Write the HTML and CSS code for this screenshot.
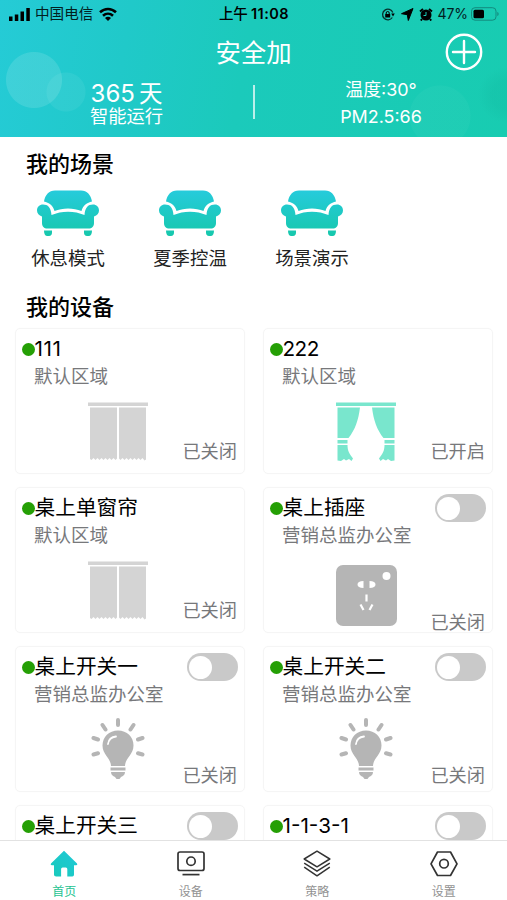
FILE: index.html
```html
<!DOCTYPE html>
<html lang="zh-CN">
<head>
<meta charset="utf-8">
<meta name="viewport" content="width=device-width, initial-scale=1">
<title>安全加</title>
<link rel="stylesheet" href="styles.css">
</head>
<body>
<svg class="defs" aria-hidden="true">
  <defs>
    <linearGradient id="teal" x1="0" y1="0" x2="0" y2="46" gradientUnits="userSpaceOnUse">
      <stop offset="0" stop-color="#26cbdc"/><stop offset="1" stop-color="#16c8ac"/>
    </linearGradient>
    <linearGradient id="home" x1="1" y1="0" x2="0" y2="1">
      <stop offset="0" stop-color="#1fc8d8"/><stop offset="1" stop-color="#18caba"/>
    </linearGradient>
    <symbol id="sofa" viewBox="0 0 62 46">
      <g fill="url(#teal)">
        <path d="M7 11.500C8 5 12 .5 18 .5h26C50 .5 54 5 55 11.500c-5 1-9 4-10.500 9.500-8-3.500-19-3.500-27 0-1.500-5.500-5.500-8.500-10.500-9.500z"/>
        <path d="M6 14.500c5 0 8 3 8.500 10.500 10-4.500 23-4.500 33 0 .5-7.500 3.500-10.500 8.500-10.500 3.500 0 6 2.500 6 6 0 3-2 5-5 6v6.500c0 3.500-2 5.500-5.500 5.500h-41C7 38.500 5 36.500 5 33v-6.500c-3-1-5-3-5-6 0-3.500 2.500-6 6-6z"/>
        <path d="M7 40.500h8v2c0 2-1 3.500-3 3.500h-1.500C8 46 7 44 7 40.500zM47 40.500h8C55 44 54 46 51.500 46H50c-2 0-3-1.500-3-3.500z"/>
      </g>
    </symbol>
    <symbol id="curtain-closed" viewBox="0 0 60 60">
      <g fill="#d4d4d4">
        <path d="M0 .5h60v3.500H0z"/>
        <path d="M2 5.500h27v51l-1.500 1.500-2-2-2 2-2-2-2 2-2-2-2 2-2-2-2 2-2-2-2 2-2-2-2 2-1.500-1zM31 5.500h27v52l-1.500 1-2-2.500-2 2-2-2-2 2-2-2-2 2-2-2-2 2-2-2-2 2-2-2-2 2-1.500-1.500z"/>
      </g>
    </symbol>
    <symbol id="curtain-open" viewBox="0 0 60 60">
      <g fill="#79e6cd">
        <path d="M0 .5h60v3.500H0z"/>
        <path d="M1.500 5.500H24C22.500 18 19 28 12.500 36H1.500zM58.500 5.500H36C37.500 18 41 28 47.500 36h11zM1.500 38h10v3.500h-10zM58.500 38h-10v3.500h10z"/>
        <path d="M1.500 43h10c0 6 2 9 5.500 13.500l-1.500 2.500-2.500-2-3 1.500-2-1.500-3 2-3.500-.5zM58.500 43h-10c0 6-2 9-5.500 13.500l1.500 2.500 2.500-2 3 1.500 2-1.500 3 2 3.500-.5z"/>
      </g>
    </symbol>
    <symbol id="socket" viewBox="0 0 61 61">
      <rect width="61" height="61" rx="7" fill="#b5b5b5"/>
      <g fill="#fff">
        <circle cx="50.500" cy="11" r="4"/>
        <path d="M27.500 16v7c-4 0-6-1.500-6-3.500s2-3.500 6-3.500zM33.500 16v7c4 0 6-1.500 6-3.500s-2-3.500-6-3.500z"/>
      </g>
      <path d="M30.500 29.500v7M24.500 39.500l3 5.500M36.500 39.500l-3 5.500" fill="none" stroke="#fff" stroke-width="2.200"/>
    </symbol>
    <symbol id="bulb" viewBox="0 0 54 62">
      <g fill="#b5b5b5">
        <path d="M27 12.500c9 0 15.500 6.500 15.500 15 0 9-8.500 13-8.500 20.500H20c0-7.500-8.500-11.500-8.500-20.500 0-8.500 6.500-15 15.500-15zM19.500 49.500h15v3h-15zM20 54h14c0 3-2 4-4 5l-1.500 2h-3L24 59c-2-1-4-2-4-5z"/>
      </g>
      <g stroke="#b5b5b5" stroke-width="4" stroke-linecap="round" fill="none">
        <path d="M27 2v5M11.500 7l3 4.500M42.500 7l-3 4.500M2.500 20l4.500 1.500M51.500 20L47 21.500M2.500 36.500L7 35.300M51.500 36.500L47 35.300"/>
      </g>
      <path d="M17 26c.5-4 3.500-7 8-7.500" stroke="#fff" stroke-width="1.800" stroke-linecap="round" fill="none"/>
    </symbol>
  </defs>
</svg>

<div class="app">
  <header class="hero">
    <div class="statusbar">
      <div class="statusbar-left">
        <svg width="21" height="14" viewBox="0 0 21 14"><path d="M0 9.500h3.500V14H0zM5.800 7.500h3.500V14H5.800zM11.500 4.500H15V14h-3.500zM17.300 1h3.500v13h-3.500z"/></svg>
        <span class="carrier">中国电信</span>
        <svg width="18" height="14" viewBox="0 0 18 14"><g fill="none" stroke="#000" stroke-width="2.600"><path d="M1 5.200c4.800-4.300 11.200-4.300 16 0M4 8.700c3-2.700 7-2.700 10 0"/></g><path d="M6 10.900c1.800-1.500 4.200-1.500 6 0l-3 3z"/></svg>
      </div>
      <div class="clock">上午<b>11:08</b></div>
      <div class="statusbar-right">
        <svg width="14" height="13" viewBox="0 0 14 13"><path d="M11.800 4.500A5.300 5.300 0 1 0 11.300 9.500" fill="none" stroke="#06302c" stroke-width="1.300"/><path d="M10.200 5.500h3.600l-1.800 3zM4.200 6h5v3.500h-5z"/><path d="M5.200 6V5a1.500 1.500 0 0 1 3 0v1" fill="none" stroke="#000"/></svg>
        <svg width="14" height="13" viewBox="0 0 14 13"><path d="M13 .5L8.300 12.500 7.300 6.700 1.500 5.700z" stroke="#000"/></svg>
        <svg width="14" height="13" viewBox="0 0 14 13"><circle cx="7" cy="7" r="5.500"/><path d="M1 3.500L4 1M13 3.500L10 1M3 11l-1.200 1.500M11 11l1.200 1.500" stroke="#000" stroke-width="2"/><path d="M7 4v3.500H4.500" fill="none" stroke="#1acab8"/></svg>
        <span class="percent">47%</span>
        <svg class="battery" width="28" height="14" viewBox="0 0 28 14"><rect x=".5" y=".7" width="24.500" height="12.500" rx="3.500" fill="none" stroke="#138b7e"/><rect x="2.500" y="2.700" width="10.500" height="8.500" rx="1.500"/><path d="M26.300 5v4c1.800-.8 1.800-3.200 0-4z" fill="#138b7e"/></svg>
      </div>
    </div>
    <div class="navbar">
      <h1>安全加</h1>
      <svg class="add" width="38" height="38" viewBox="0 0 38 38" fill="none" stroke="#fff"><circle cx="19" cy="19" r="17.200" stroke-width="2.400"/><path d="M19 8v22M8 19h22" stroke-width="2.400" stroke-linecap="round"/></svg>
    </div>
    <div class="stats">
      <div class="stat stat-days"><div class="days">365<span>天</span></div><div class="caption">智能运行</div></div>
      <div class="divider"></div>
      <div class="stat stat-air"><div>温度:30°</div><div>PM2.5:66</div></div>
    </div>
  </header>

  <main>
    <h2>我的场景</h2>
    <div class="scenes">
      <div class="scene"><svg width="62" height="46"><use href="#sofa"/></svg><span>休息模式</span></div>
      <div class="scene"><svg width="62" height="46"><use href="#sofa"/></svg><span>夏季控温</span></div>
      <div class="scene"><svg width="62" height="46"><use href="#sofa"/></svg><span>场景演示</span></div>
    </div>
    <h2>我的设备</h2>
    <div class="devices">
      <article class="card curtain">
        <div class="card-head"><i class="dot"></i><span class="name ones">111</span></div>
        <div class="area">默认区域</div>
        <div class="card-body"><svg><use href="#curtain-closed"/></svg><span class="state">已关闭</span></div>
      </article>
      <article class="card curtain">
        <div class="card-head"><i class="dot"></i><span class="name twos">222</span></div>
        <div class="area">默认区域</div>
        <div class="card-body"><svg><use href="#curtain-open"/></svg><span class="state">已开启</span></div>
      </article>
      <article class="card curtain">
        <div class="card-head"><i class="dot"></i><span class="name">桌上单窗帘</span></div>
        <div class="area">默认区域</div>
        <div class="card-body"><svg><use href="#curtain-closed"/></svg><span class="state">已关闭</span></div>
      </article>
      <article class="card plug">
        <div class="card-head"><i class="dot"></i><span class="name">桌上插座</span><i class="switch"></i></div>
        <div class="area">营销总监办公室</div>
        <div class="card-body"><svg><use href="#socket"/></svg><span class="state">已关闭</span></div>
      </article>
      <article class="card light">
        <div class="card-head"><i class="dot"></i><span class="name">桌上开关一</span><i class="switch"></i></div>
        <div class="area">营销总监办公室</div>
        <div class="card-body"><svg><use href="#bulb"/></svg><span class="state">已关闭</span></div>
      </article>
      <article class="card light">
        <div class="card-head"><i class="dot"></i><span class="name">桌上开关二</span><i class="switch"></i></div>
        <div class="area">营销总监办公室</div>
        <div class="card-body"><svg><use href="#bulb"/></svg><span class="state">已关闭</span></div>
      </article>
      <article class="card">
        <div class="card-head"><i class="dot"></i><span class="name">桌上开关三</span><i class="switch"></i></div>
      </article>
      <article class="card">
        <div class="card-head"><i class="dot"></i><span class="name">1-1-3-1</span><i class="switch"></i></div>
      </article>
    </div>
  </main>

  <nav class="tabs">
    <a class="tab active"><svg width="28" height="28" viewBox="0 0 28 28"><path d="M14 .8L27 13.500q1 1.500-.8 1.800H24v9.500q0 1.700-1.700 1.700h-5V19q0-1.500-1.500-1.500h-3.200q-1.500 0-1.500 1.500v7.500h-5Q4 26.500 4 24.800v-9.500H1.800Q0 15 1 13.500z" fill="url(#home)"/></svg><span>首页</span></a>
    <a class="tab"><svg width="28" height="28" viewBox="0 0 28 28" fill="none" stroke="#333" stroke-width="1.700"><rect x="1" y="2" width="26" height="18.500" rx="2"/><circle cx="14" cy="11.200" r="4.200"/><path d="M5.500 24.600h17"/></svg><span>设备</span></a>
    <a class="tab"><svg width="28" height="28" viewBox="0 0 28 28" fill="none" stroke="#333" stroke-width="1.500" stroke-linejoin="round"><path d="M14 1.200L26.800 9 14 16.800 1.200 9zM1.200 13.200L14 21.200l12.800-8M1.200 17.200L14 25.800l12.800-8.600"/></svg><span>策略</span></a>
    <a class="tab"><svg width="28" height="28" viewBox="0 0 28 28" fill="none" stroke="#333" stroke-width="1.700" stroke-linejoin="round"><path d="M7.500 2h13L27 13.800l-6.500 11.700h-13L1 13.800z"/><circle cx="14" cy="13.700" r="4.300"/></svg><span>设置</span></a>
  </nav>
</div>
</body>
</html>
```
FILE: styles.css
```css
* { box-sizing: border-box; }
body {
  margin: 0;
  background: #fff;
  color: #000;
  font-family: Inter, "Noto Sans CJK SC", sans-serif;
}
h1, h2 { margin: 0; font-weight: 400; }
svg { display: block; flex: none; }
.defs { position: absolute; width: 0; height: 0; }
.app {
  width: 507px;
  height: 900px;
  overflow: hidden;
  display: flex;
  flex-direction: column;
}

.hero {
  flex: none;
  height: 137px;
  color: #fff;
  background:
    radial-gradient(circle at 34px 80px, rgba(255,255,255,.12) 27.5px, transparent 28.5px),
    radial-gradient(circle at 66px 92px, rgba(255,255,255,.06) 19px, transparent 20px),
    radial-gradient(circle at 440px 116px, rgba(255,255,255,.03) 30px, transparent 31px),
    radial-gradient(circle at 506px 95px, rgba(0,130,110,.08) 14px, transparent 28px),
    linear-gradient(100deg, #25cbd6 0%, #20c9c9 25%, #1bcabb 48%, #18ccb1 100%);
}
.statusbar {
  height: 28px;
  display: grid;
  grid-template-columns: 1fr auto 1fr;
  align-items: center;
  padding: 0 8px 0 9px;
  color: #02201f;
  font-size: 14.600px;
  line-height: 20px;
}
.statusbar-left, .statusbar-right { display: flex; align-items: center; }
.carrier { margin: 0 6px 0 5px; }
.clock { font-size: 14.500px; font-weight: 500; color: #000; }
.clock b { font-weight: 600; letter-spacing: .5px; margin-left: 3px; }
.statusbar-right { justify-content: flex-end; gap: 5px; }
.percent { font-size: 14px; letter-spacing: -.1px; }
.battery { margin-left: -2px; }

.navbar {
  height: 48px;
  display: grid;
  grid-template-columns: 1fr auto 1fr;
  align-items: center;
  padding: 0 24px;
}
.navbar h1 { grid-column: 2; font-size: 25.400px; line-height: 36px; padding-top: 1px; }
.add { justify-self: end; }
.stats {
  display: grid;
  grid-template-columns: 253px 2px 252px;
  height: 54px;
  align-items: start;
}
.stat { display: flex; flex-direction: column; align-items: center; }
.stat-days { padding-top: 5px; }
.days { font-size: 24px; line-height: 26px; display: flex; gap: 4px; }
.days span { font-size: 23.500px; }
.caption { font-size: 18.300px; line-height: 18px; }
.divider { height: 34px; margin-top: 9px; background: rgba(255,255,255,.7); }
.stat-air { font-size: 17.900px; line-height: 27px; }

main { flex: 1; min-height: 0; overflow: hidden; }
h2 {
  font-size: 22px;
  font-weight: 500;
  line-height: 32px;
  padding-left: 26px;
}
main h2:first-child { margin-top: 11px; }
.scenes { display: flex; padding: 10px 0 0 7px; height: 111px; }
.scene {
  width: 122px;
  display: flex;
  flex-direction: column;
  align-items: center;
  font-size: 18.400px;
  line-height: 26px;
  color: #222;
}
.scene span { margin-top: 9px; }

.devices {
  display: grid;
  grid-template-columns: 230px 230px;
  grid-auto-rows: 146px;
  gap: 13px 18px;
  padding: 5px 0 0 15px;
}
.card {
  border: 1px solid #f5f5f5;
  border-radius: 5px;
  box-shadow: 0 0 2px rgba(0,0,0,.02);
  padding: 6px 6px 0 5.500px;
}
.card-head { display: flex; align-items: center; height: 28px; }
.dot { flex: none; width: 13px; height: 13px; border-radius: 50%; background: #259f05; }
.name { font-size: 20.700px; line-height: 28px; }
.ones { letter-spacing: .6px; }
.twos { letter-spacing: -.5px; }
.switch {
  width: 51px;
  height: 28px;
  margin-left: auto;
  border-radius: 14px;
  background: #c9c9c9;
  display: flex;
  align-items: center;
  padding-left: 2px;
}
.switch::before { content: ""; width: 23px; height: 23px; border-radius: 50%; background: #fff; }
.area { font-size: 18.500px; line-height: 26px; padding-left: 12.500px; color: #77787b; }
.card-body { display: flex; justify-content: space-between; align-items: flex-end; }
.state { font-size: 18.200px; line-height: 26px; color: #77787b; padding-right: 1px; }
.curtain svg { width: 60px; height: 60px; margin-left: 66.500px; }
.curtain .card-body { margin-top: 13px; }
.curtain .state { margin-bottom: -2px; }
.plug svg { width: 61px; height: 61px; margin-left: 66.500px; }
.plug .card-body { margin-top: 17px; }
.plug .state { margin-bottom: -9px; }
.light svg { width: 54px; height: 62px; margin-left: 69.500px; }
.light .card-body { margin-top: 11px; }
.light .state { margin-bottom: -8px; }

.tabs {
  flex: none;
  height: 60px;
  border-top: 1px solid #e2e2e2;
  background: #fff;
  display: grid;
  grid-template-columns: repeat(4, 1fr);
  padding-left: 1px;
}
.tab {
  display: flex;
  flex-direction: column;
  align-items: center;
  padding-top: 9px;
  font-size: 12px;
  line-height: 18px;
  color: #929292;
}
.tab span { margin-top: 5px; }
.tab.active { color: #24c391; }
```
